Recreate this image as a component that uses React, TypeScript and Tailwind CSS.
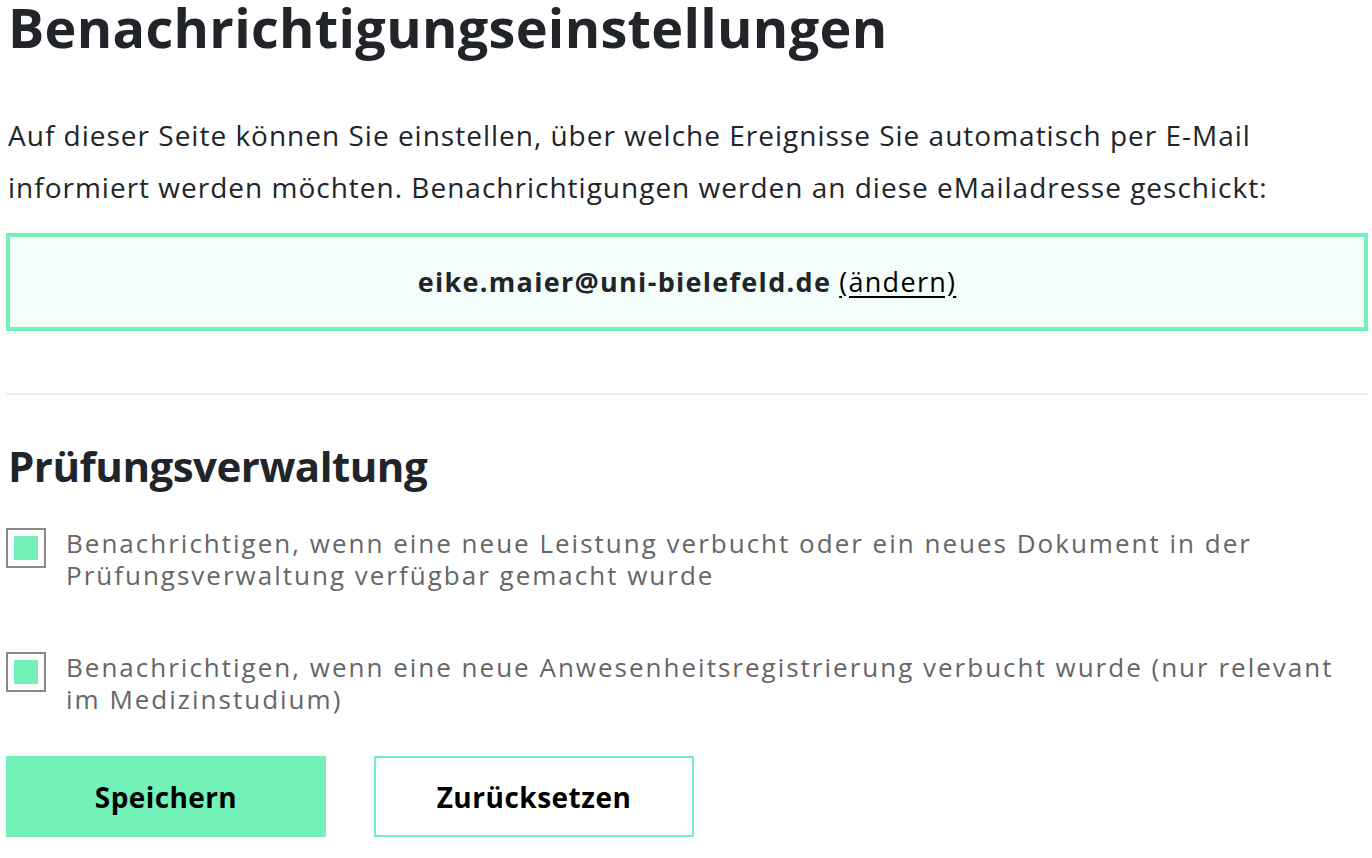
import React from "react";

function Check({ children }: { children: React.ReactNode }) {
  return (
    <label className="flex items-start gap-[20px]">
      <span className="mt-[1px] flex h-[40px] w-[40px] shrink-0 items-center justify-center border-2 border-[#888888] bg-white">
        <span className="h-[24px] w-[24px] bg-[#72f2b8]" />
      </span>
      <span className="text-[26px] leading-[32px] tracking-[2px] text-[#666666]">{children}</span>
    </label>
  );
}

export default function App() {
  return (
    <div
      className="min-h-[858px] bg-white pl-[6px] pr-[4px] text-[#212529]"
      style={{ fontFamily: "'Open Sans', 'Noto Sans', sans-serif" }}
    >
      <h1 className="pl-[2px] text-[54px] font-bold leading-[54px] tracking-[0.3px]">Benachrichtigungseinstellungen</h1>
      <p className="mt-[55px] pl-[2px] text-[28px] leading-[52px] tracking-[1px]">
        Auf dieser Seite können Sie einstellen, über welche Ereignisse Sie automatisch per E-Mail informiert werden möchten. Benachrichtigungen werden an diese eMailadresse geschickt:
      </p>
      <div className="mt-[20px] flex h-[98px] items-center justify-center border-4 border-[#72f2b8] bg-[#f3fdf9] text-[27px] tracking-[1.3px]">
        <span className="font-bold">eike.maier@uni-bielefeld.de</span>
        <span className="ml-[8px] text-black underline underline-offset-[4px]">(ändern)</span>
      </div>
      <hr className="mt-[62px] border-0 border-t-2 border-[#eeeeee]" />
      <h2 className="mt-[43px] pl-[2px] text-[42px] font-bold leading-[56px] tracking-[-0.5px]">Prüfungsverwaltung</h2>
      <div className="mt-[33px] flex flex-col gap-[60px]">
        <Check>
          Benachrichtigen, wenn eine neue Leistung verbucht oder ein neues Dokument in der Prüfungsverwaltung verfügbar gemacht wurde
        </Check>
        <Check>
          Benachrichtigen, wenn eine neue Anwesenheitsregistrierung verbucht wurde (nur relevant im Medizinstudium)
        </Check>
      </div>
      <div className="mt-[41px] flex gap-[48px]">
        <button className="h-[81px] w-[320px] bg-[#72f2b8] text-[28px] font-bold tracking-[0.4px] text-black">Speichern</button>
        <button className="h-[81px] w-[320px] border-2 border-[#72f2b8] bg-white text-[28px] font-bold tracking-[0.5px] text-black">Zurücksetzen</button>
      </div>
    </div>
  );
}
